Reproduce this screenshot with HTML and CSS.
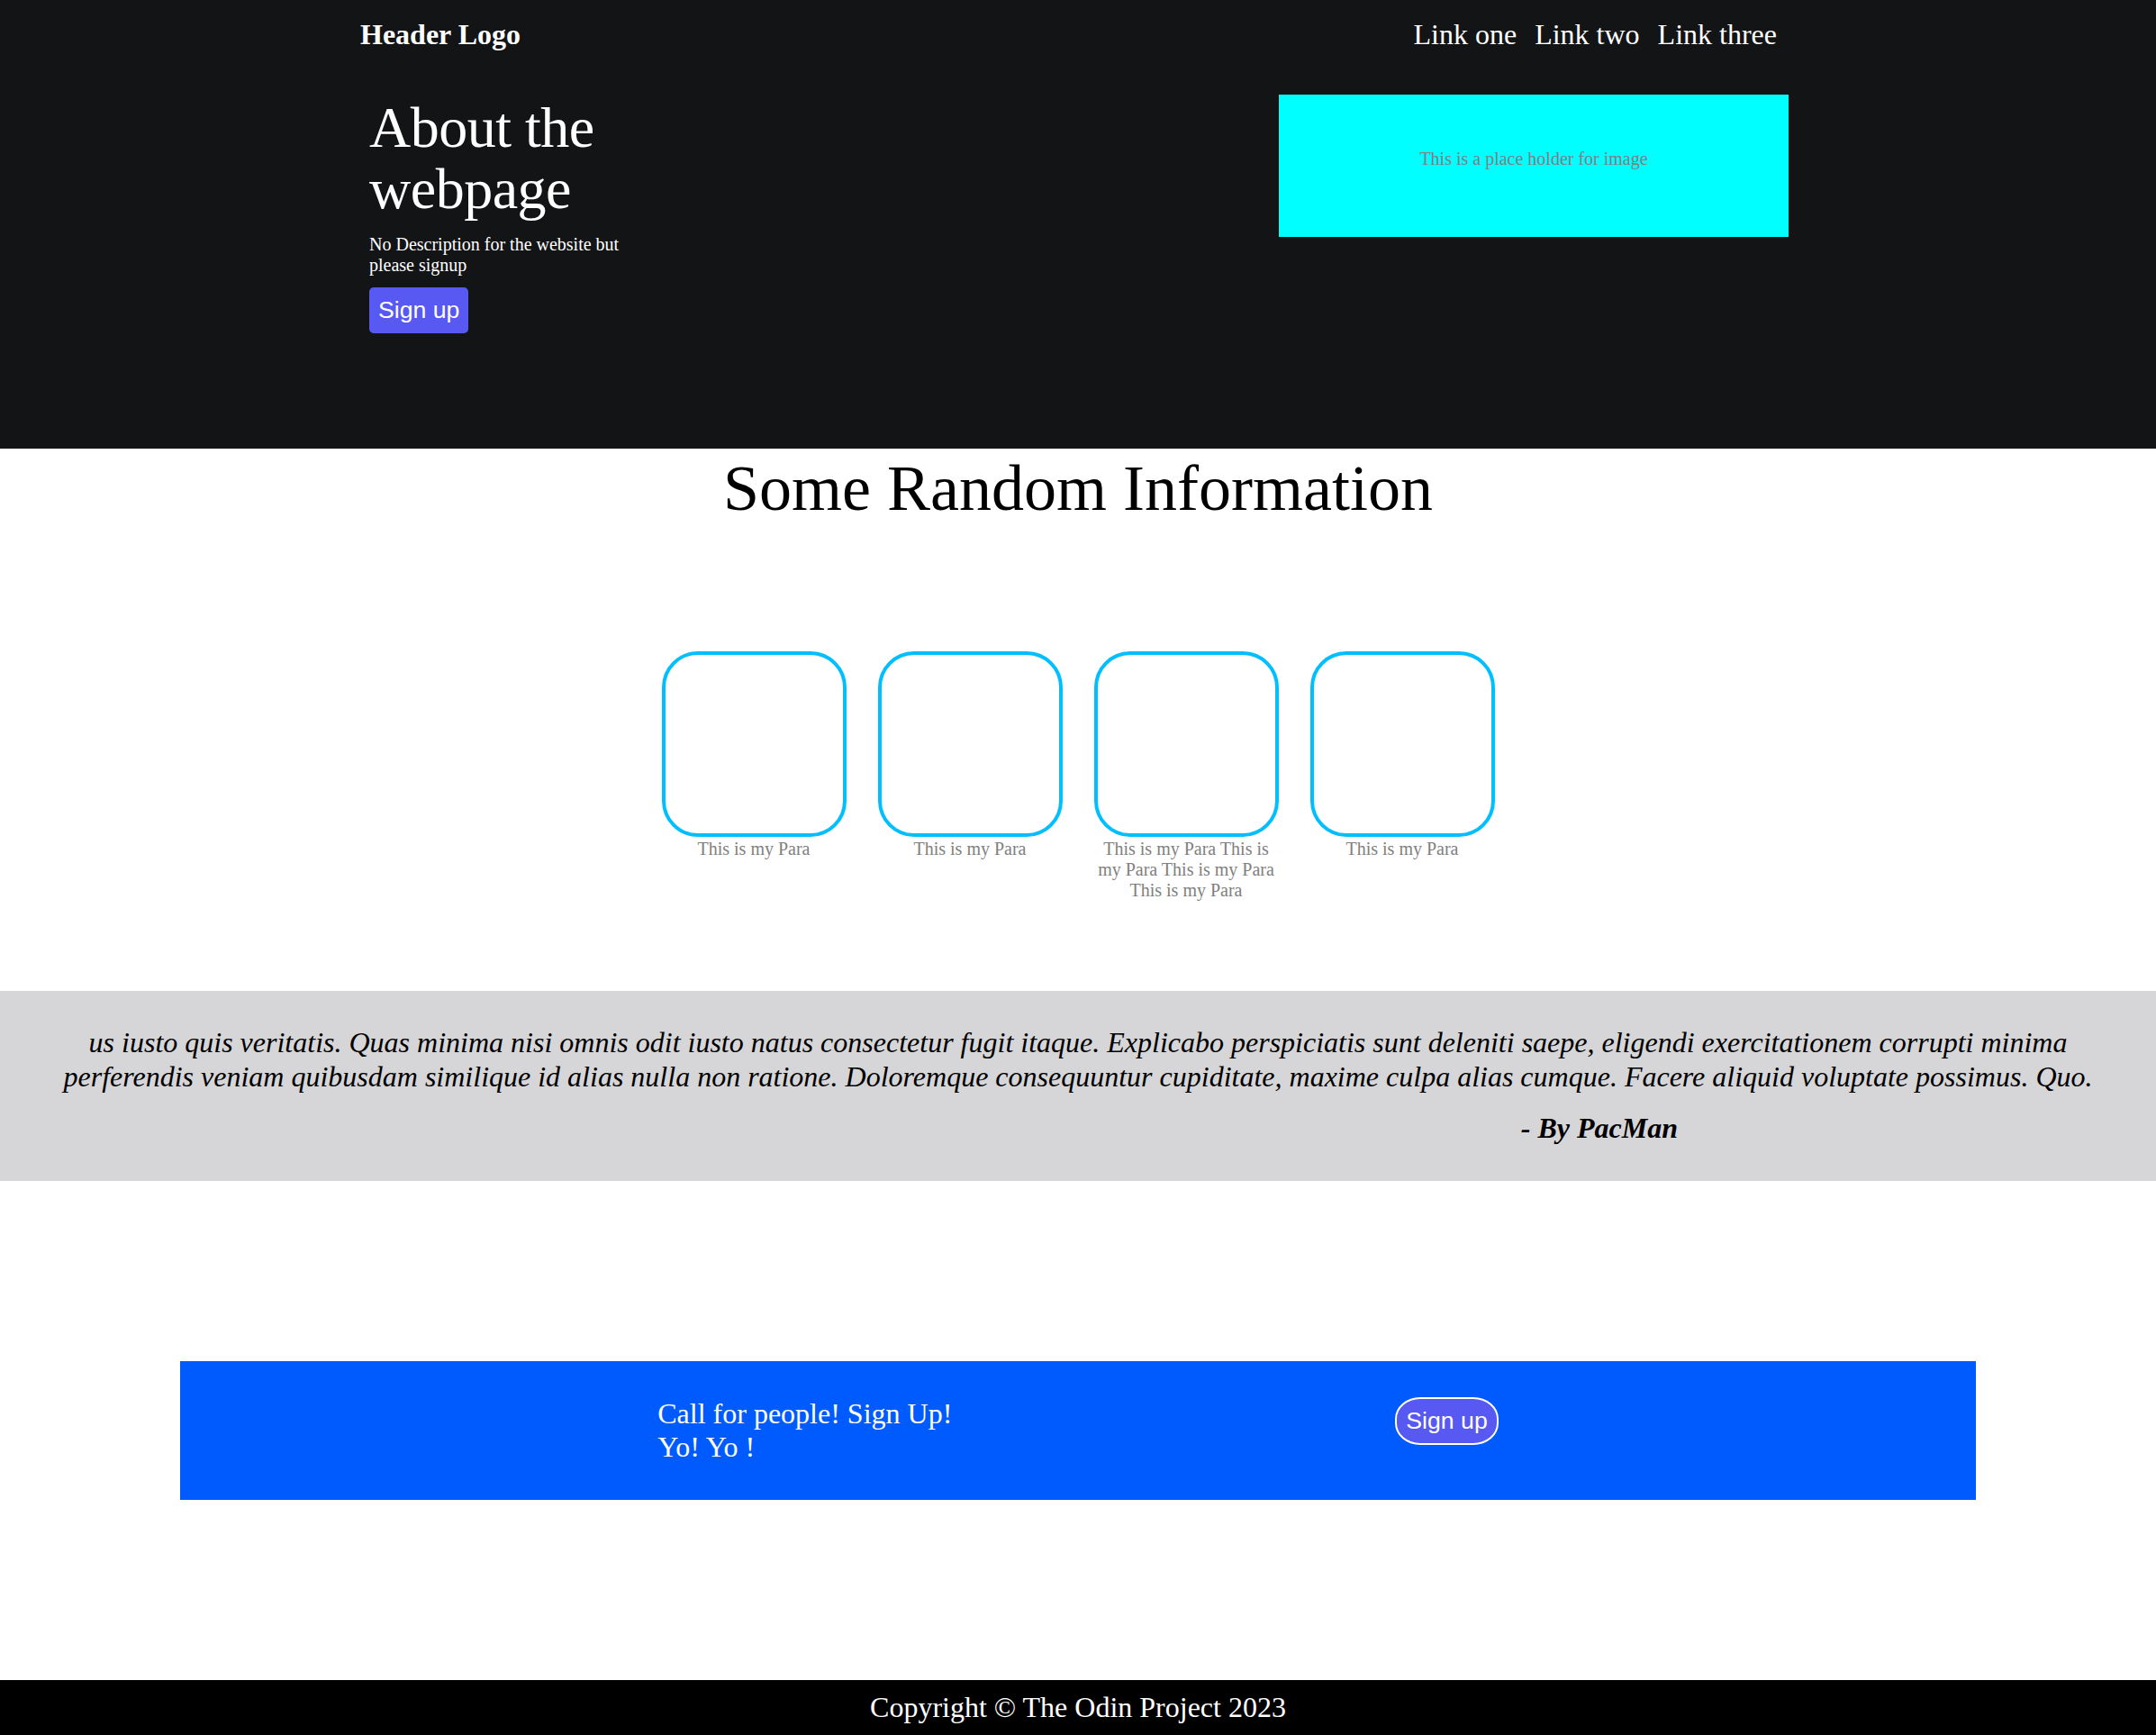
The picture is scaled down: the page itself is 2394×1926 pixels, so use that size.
FILE: index.html
```html
<!DOCTYPE html>
<html lang="en">
<head>
<meta charset="utf-8">
<title>Landing Page</title>
<link rel="stylesheet" href="styles.css">
</head>
<body>
<header class="site-header">
  <div class="header-inner">
    <div class="topbar">
      <div class="logo">Header Logo</div>
      <nav class="nav">
        <a class="nav-link" href="#">Link one</a>
        <a class="nav-link" href="#">Link two</a>
        <a class="nav-link" href="#">Link three</a>
      </nav>
    </div>
    <div class="hero">
      <div class="hero-text">
        <h1 class="hero-title">About the webpage</h1>
        <p class="hero-desc">No Description for the website but please signup</p>
        <button class="btn">Sign up</button>
      </div>
      <div class="hero-image">This is a place holder for image</div>
    </div>
  </div>
</header>

<main>
  <section class="info">
    <h2 class="info-title">Some Random Information</h2>
    <div class="cards">
      <div class="card"><div class="card-box"></div><p class="card-text">This is my Para</p></div>
      <div class="card"><div class="card-box"></div><p class="card-text">This is my Para</p></div>
      <div class="card"><div class="card-box"></div><p class="card-text">This is my Para This is my Para This is my Para This is my Para</p></div>
      <div class="card"><div class="card-box"></div><p class="card-text">This is my Para</p></div>
    </div>
  </section>

  <section class="quote">
    <p class="quote-text">us iusto quis veritatis. Quas minima nisi omnis odit iusto natus consectetur fugit itaque. Explicabo perspiciatis sunt deleniti saepe, eligendi exercitationem corrupti minima perferendis veniam quibusdam similique id alias nulla non ratione. Doloremque consequuntur cupiditate, maxime culpa alias cumque. Facere aliquid voluptate possimus. Quo.</p>
    <p class="quote-author">- By PacMan</p>
  </section>

  <section class="cta">
    <div class="cta-text">Call for people! Sign Up!<br>Yo! Yo !</div>
    <button class="btn btn-pill">Sign up</button>
  </section>
</main>

<footer class="site-footer">Copyright © The Odin Project 2023</footer>
</body>
</html>
```

FILE: styles.css
```css
* { box-sizing: border-box; }

body {
  margin: 0;
  font-family: "Liberation Serif", "Times New Roman", Times, serif;
  font-size: 32px;
  color: #000;
  background: #fff;
}

.site-header {
  background: #131416;
  color: #fff;
  height: 498px;
}

.header-inner {
  width: 1594px;
  margin: 0 auto;
  padding-top: 20px;
}

.topbar {
  display: flex;
  justify-content: space-between;
  align-items: flex-start;
  line-height: 37px;
}

.logo {
  font-weight: bold;
  font-size: 32px;
}

.nav {
  display: flex;
  gap: 20px;
  padding-right: 21px;
}

.nav-link {
  color: #fff;
  text-decoration: none;
  font-size: 32px;
}

.hero {
  display: flex;
  justify-content: space-between;
  align-items: flex-start;
  margin-top: 48px;
  padding-left: 10px;
  padding-right: 8px;
}

.hero-text {
  width: 300px;
}

.hero-title {
  margin: 0;
  padding-top: 3px;
  font-size: 64px;
  font-weight: normal;
  line-height: 68px;
  letter-spacing: -0.5px;
}

.hero-desc {
  margin: 16px 0 13px;
  font-size: 20px;
  line-height: 23px;
}

.btn {
  font-family: "Liberation Sans", Arial, Helvetica, sans-serif;
  font-size: 26.67px;
  color: #fff;
  background: #5858f2;
  border: none;
  border-radius: 5px;
  padding: 10px;
  line-height: 31px;
  cursor: pointer;
}

.hero-image {
  width: 566px;
  height: 158px;
  background: #00ffff;
  color: #808080;
  font-size: 20px;
  line-height: 23px;
  display: flex;
  align-items: center;
  justify-content: center;
  padding-bottom: 16px;
}

.info {
  padding-bottom: 100px;
}

.info-title {
  margin: 0;
  padding-top: 6px;
  font-size: 72px;
  font-weight: normal;
  line-height: 76px;
  text-align: center;
}

.cards {
  display: flex;
  justify-content: center;
  align-items: flex-start;
  gap: 35px;
  margin-top: 143px;
}

.card {
  width: 205px;
}

.card-box {
  width: 205px;
  height: 206px;
  border: 4px solid #00bfff;
  border-radius: 40px;
}

.card-text {
  margin: 2px 0 0;
  font-size: 20px;
  line-height: 23px;
  color: #808080;
  text-align: center;
}

.quote {
  background: #d6d5d7;
  padding: 38px 40px 40px;
  text-align: center;
}

.quote-text {
  margin: 0;
  font-style: italic;
  font-size: 32px;
  line-height: 38px;
}

.quote-author {
  margin: 19px 0 0;
  font-style: italic;
  font-weight: bold;
  font-size: 32px;
  line-height: 38px;
  text-align: right;
  padding-right: 491px;
}

.cta {
  margin: 200px 200px 200px;
  background: #005bff;
  color: #fff;
  padding: 40px 0 40px;
  display: flex;
  justify-content: center;
  align-items: flex-start;
  gap: 492px;
}

.cta-text {
  font-size: 32px;
  line-height: 37px;
}

.btn-pill {
  margin-top: 0;
  border: 2px solid #fff;
  border-radius: 28px / 24px;
  padding: 9px 10px;
}

.site-footer {
  background: #000;
  color: #fff;
  text-align: center;
  font-size: 32px;
  line-height: 37px;
  padding: 12px 0 12px;
}
```
